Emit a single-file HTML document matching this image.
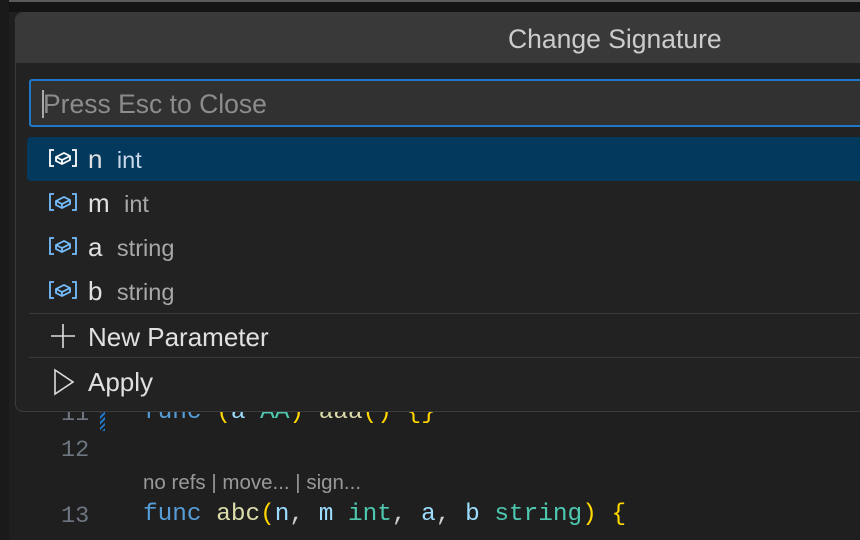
<!DOCTYPE html>
<html><head><meta charset="utf-8"><style>
body{margin:0;width:860px;height:540px;overflow:hidden;background:#1f1f1f;font-family:"Liberation Sans",sans-serif;position:relative}
.top{position:absolute;left:0;top:0;width:860px;height:2px;background:#5a5a5a}
.strip{position:absolute;left:0;top:2px;width:860px;height:10px;background:#141414}
.side{position:absolute;left:0;top:0;width:9px;height:540px;background:#1a1a1a}
.code{position:absolute;font-family:"Liberation Mono",monospace;font-size:24.4px;white-space:pre}
.ln{position:absolute;left:61px;font-family:"Liberation Mono",monospace;font-size:23.5px;color:#6e7681}
.panel{position:absolute;left:15px;top:12px;width:880px;height:398px;background:#222222;border:1px solid #3c3c3c;border-radius:8px;overflow:hidden}
.title{height:50px;background:#393939;color:#cccccc;font-size:26.5px;line-height:52px;padding-left:492px;box-sizing:border-box}
.input{position:absolute;left:13px;top:66px;width:900px;height:48px;background:#313131;border:2px solid #1f78c8;box-sizing:border-box;border-radius:3px;color:#8c8c8c;font-size:26.5px;line-height:46px;padding-left:12px}
.input:before{content:"";position:absolute;left:11px;top:9px;width:2px;height:28px;background:#aaa}
.row{position:absolute;left:11px;width:900px;height:44px;font-size:26px;color:#e0e0e0;line-height:44px}
.row.sel{background:#04395e;border-radius:4px}
.row .n{position:absolute;left:61px}
.row .t{color:#a8a8a8;font-size:23.5px}
.row svg{position:absolute;left:22px;top:11px}
.sep{position:absolute;left:13px;width:900px;height:1px;background:#3a3a3a}
</style></head><body>
<div class="top"></div><div class="strip"></div><div class="side"></div>
<div class="ln" style="top:401px">11</div>
<div style="position:absolute;left:100px;top:405px;width:5px;height:26px;background:repeating-linear-gradient(135deg,#1f78c8 0 2px,transparent 2px 4px)"></div>
<div class="code" style="left:143px;top:399px"><span style="color:#569cd6">func</span> <span style="color:#ffd700">(</span><span style="color:#9cdcfe">a</span> <span style="color:#4ec9b0">AA</span><span style="color:#ffd700">)</span> <span style="color:#dcdcaa">aaa</span><span style="color:#ffd700">()</span> <span style="color:#ffd700">{}</span></div>
<div class="ln" style="top:437px">12</div>
<div style="position:absolute;left:143px;top:471px;color:#999;font-size:20.5px">no refs | move... | sign...</div>
<div class="ln" style="top:503px">13</div>
<div class="code" style="left:143px;top:501px"><span style="color:#569cd6">func</span> <span style="color:#dcdcaa">abc</span><span style="color:#ffd700">(</span><span style="color:#9cdcfe">n</span><span style="color:#ccc">,</span> <span style="color:#9cdcfe">m</span> <span style="color:#4ec9b0">int</span><span style="color:#ccc">,</span> <span style="color:#9cdcfe">a</span><span style="color:#ccc">,</span> <span style="color:#9cdcfe">b</span> <span style="color:#4ec9b0">string</span><span style="color:#ffd700">)</span> <span style="color:#ffd700">{</span></div>
<div class="panel">
<div class="title">Change Signature</div>
<div class="input">Press Esc to Close</div>
<div class="row sel" style="top:124px"><svg width="28" height="20" viewBox="0 0 28 20" fill="none" stroke="#fff" stroke-width="1.8"><path d="M5 2H1v16h4M23 2h4v16h-4"/><path d="M7 9l8-4 6 3v4l-8 4-6-3z M7 9l6 3 8-4 M13 12v4"/></svg><span class="n">n&nbsp; <span class="t" style="color:#c8d8e8">int</span></span></div>
<div class="row" style="top:168px"><svg width="28" height="20" viewBox="0 0 28 20" fill="none" stroke="#75beff" stroke-width="1.8"><path d="M5 2H1v16h4M23 2h4v16h-4"/><path d="M7 9l8-4 6 3v4l-8 4-6-3z M7 9l6 3 8-4 M13 12v4"/></svg><span class="n">m&nbsp; <span class="t">int</span></span></div>
<div class="row" style="top:212px"><svg width="28" height="20" viewBox="0 0 28 20" fill="none" stroke="#75beff" stroke-width="1.8"><path d="M5 2H1v16h4M23 2h4v16h-4"/><path d="M7 9l8-4 6 3v4l-8 4-6-3z M7 9l6 3 8-4 M13 12v4"/></svg><span class="n">a&nbsp; <span class="t">string</span></span></div>
<div class="row" style="top:256px"><svg width="28" height="20" viewBox="0 0 28 20" fill="none" stroke="#75beff" stroke-width="1.8"><path d="M5 2H1v16h4M23 2h4v16h-4"/><path d="M7 9l8-4 6 3v4l-8 4-6-3z M7 9l6 3 8-4 M13 12v4"/></svg><span class="n">b&nbsp; <span class="t">string</span></span></div>
<div class="sep" style="top:300px"></div>
<div class="row" style="top:302px"><svg width="28" height="28" viewBox="0 0 28 28" style="left:22px;top:7px" stroke="#ddd" stroke-width="1.6"><path d="M14 2v24M2 14h24"/></svg><span class="n">New Parameter</span></div>
<div class="sep" style="top:344px"></div>
<div class="row" style="top:347px"><svg width="24" height="28" viewBox="0 0 24 28" style="left:26px;top:8px" fill="none" stroke="#ddd" stroke-width="1.6"><path d="M2 2l18 12L2 26z"/></svg><span class="n">Apply</span></div>
</div>
</body></html>
